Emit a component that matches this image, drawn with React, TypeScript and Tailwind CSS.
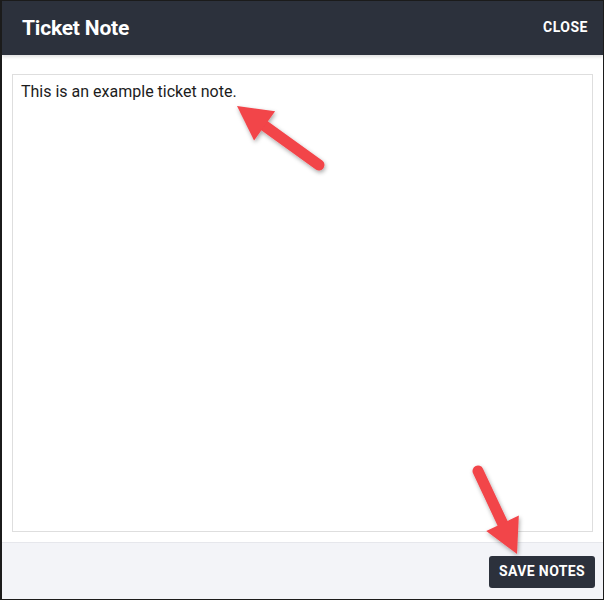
import React from 'react';

function Arrow({ x1, y1, x2, y2 }: { x1: number; y1: number; x2: number; y2: number }) {
  // shaft from tail to the base of the head, triangle head at the tip
  const dx = x2 - x1;
  const dy = y2 - y1;
  const len = Math.hypot(dx, dy);
  const ux = dx / len;
  const uy = dy / len;
  const head = 34;
  const half = 18;
  const bx = x2 - ux * head;
  const by = y2 - uy * head;
  const px = -uy * half;
  const py = ux * half;
  return (
    <g>
      <line x1={x1} y1={y1} x2={bx + ux * 4} y2={by + uy * 4} stroke="#f2444a" strokeWidth={11} strokeLinecap="round" />
      <polygon points={`${x2},${y2} ${bx + px},${by + py} ${bx - px},${by - py}`} fill="#f2444a" />
    </g>
  );
}

export default function App() {
  return (
    <div className="relative w-[604px] h-[600px] bg-white border border-l-2 border-[#1b1b1b] flex flex-col font-['Roboto',sans-serif] overflow-hidden">
      {/* header */}
      <div className="h-[54px] shrink-0 bg-[#2c313c] flex items-center justify-between pl-[20px] pr-[15px] shadow-[0_2px_3px_rgba(0,0,0,0.12)] z-10">
        <h1 className="text-white text-[21px] font-bold tracking-[-0.2px] pt-[2px]">Ticket Note</h1>
        <button className="text-white text-[14px] font-bold tracking-[0.5px] pb-[2px]">CLOSE</button>
      </div>

      {/* body */}
      <div className="flex-1 px-[10px] pt-[19px] pb-[10px] bg-white">
        <textarea
          className="w-full h-full resize-none border border-[#dedede] outline-none px-[8px] py-[5px] text-[16px] leading-[24px] text-[#1c1c1c]"
          defaultValue="This is an example ticket note."
        />
      </div>

      {/* footer */}
      <div className="h-[57px] shrink-0 bg-[#f3f4f8] border-t border-[#e6e7ec] flex items-center justify-end pr-[8px] pt-[1px]">
        <button className="h-[32px] w-[106px] rounded-[3px] bg-[#2c313c] text-white text-[14px] font-bold tracking-[0.4px]">
          SAVE NOTES
        </button>
      </div>

      <svg className="absolute inset-0 pointer-events-none" width={604} height={600}>
        <defs>
          <filter id="sh" x="-20%" y="-20%" width="140%" height="140%">
            <feDropShadow dx="1" dy="2" stdDeviation="2" floodColor="#000" floodOpacity="0.35" />
          </filter>
        </defs>
        <g filter="url(#sh)">
          <Arrow x1={317} y1={164} x2={235} y2={105} />
          <Arrow x1={476} y1={470} x2={515} y2={553} />
        </g>
      </svg>
    </div>
  );
}
